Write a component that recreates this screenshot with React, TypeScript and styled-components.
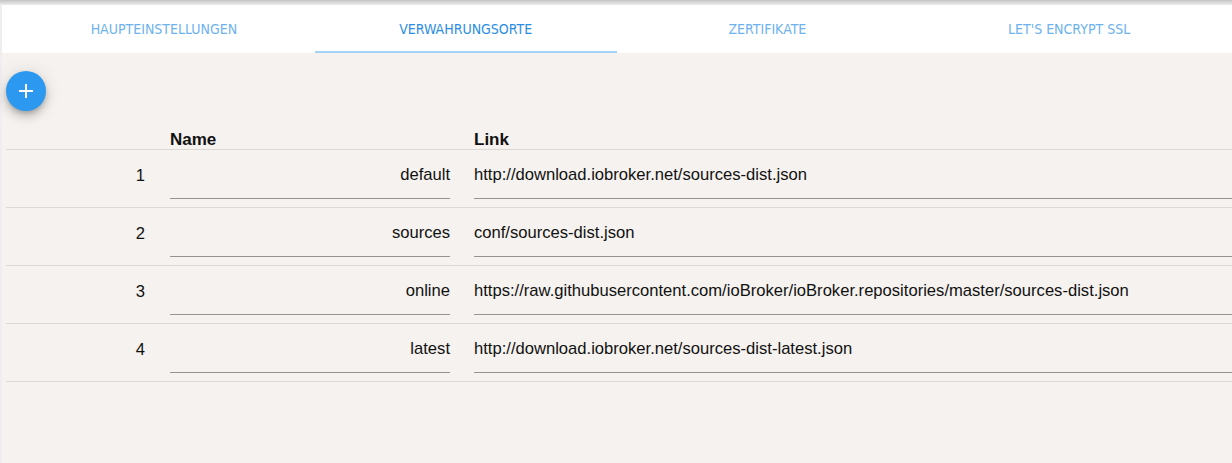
import React from 'react'
import styled, { createGlobalStyle } from 'styled-components'

const GlobalStyle = createGlobalStyle`
  html, body {
    margin: 0;
    padding: 0;
    background: #f5f2ef;
  }
  #root {
    height: 463px;
    overflow: hidden;
  }
`

const tabs = ['Haupteinstellungen', 'Verwahrungsorte', 'Zertifikate', "Let's Encrypt SSL"]

const repos = [
  { name: 'default', link: 'http://download.iobroker.net/sources-dist.json' },
  { name: 'sources', link: 'conf/sources-dist.json' },
  { name: 'online', link: 'https://raw.githubusercontent.com/ioBroker/ioBroker.repositories/master/sources-dist.json' },
  { name: 'latest', link: 'http://download.iobroker.net/sources-dist-latest.json' },
]

const Page = styled.div`
  height: 463px;
  background: #f5f2ef;
  display: flex;
  flex-direction: column;
  overflow: hidden;
`

const TopBar = styled.div`
  height: 5px;
  flex-shrink: 0;
  background: linear-gradient(#c4c4c4, #dcdcdc 60%, #ececec);
`

const Body = styled.div`
  flex: 1;
  display: flex;
  flex-direction: column;
  border-left: 2px solid #eeeeee;
`

const TabBar = styled.div`
  height: 48px;
  flex-shrink: 0;
  background: #ffffff;
  display: flex;
  padding: 0 12px 0 11px;
`

const Tab = styled.div<{ $active?: boolean }>`
  flex: 1;
  position: relative;
  display: flex;
  align-items: center;
  justify-content: center;
  padding-bottom: 1px;
  font-family: 'DejaVu Sans', sans-serif;
  font-stretch: condensed;
  font-size: 14px;
  text-transform: uppercase;
  color: ${(p) => (p.$active ? '#2a8de6' : '#6db2ef')};

  &::after {
    content: '';
    position: absolute;
    left: 0;
    right: 0;
    bottom: 0;
    height: 2px;
    background: ${(p) => (p.$active ? '#a3d2f6' : 'transparent')};
  }
`

const Toolbar = styled.div`
  padding: 18px 0 0 4px;
  height: 40px;
`

const Fab = styled.button`
  width: 40px;
  height: 40px;
  border-radius: 50%;
  border: none;
  padding: 0;
  background: #2c98f0;
  box-shadow: 0 3px 5px -1px rgba(0, 0, 0, 0.2), 0 6px 10px 0 rgba(0, 0, 0, 0.14),
    0 1px 18px 0 rgba(0, 0, 0, 0.12);
  display: flex;
  align-items: center;
  justify-content: center;
`

const Table = styled.div`
  margin-left: 4px;
  width: 1400px;
  font-family: 'Liberation Sans', Arial, sans-serif;
  font-size: 16.6px;
  color: #111;
`

const Row = styled.div<{ $head?: boolean }>`
  display: grid;
  grid-template-columns: 154px 304px 1fr;
  align-items: ${(p) => (p.$head ? 'end' : 'start')};
  height: ${(p) => (p.$head ? '38px' : '57px')};
  border-bottom: 1px solid #dbd8d5;
  box-sizing: content-box;
`

const HeadCell = styled.div`
  font-weight: bold;
  font-size: 17px;
  line-height: 18px;
  padding: 0 10px;
`

const IndexCell = styled.div`
  height: 49px;
  display: flex;
  align-items: center;
  justify-content: flex-end;
  padding-right: 15px;
  padding-top: 2px;
  box-sizing: border-box;
`

const FieldCell = styled.div<{ $narrow?: boolean }>`
  padding: ${(p) => (p.$narrow ? '0 14px 0 10px' : '0 0 0 10px')};
`

const Field = styled.div<{ $right?: boolean }>`
  height: 49px;
  box-sizing: border-box;
  border-bottom: 1px solid #949494;
  display: flex;
  align-items: center;
  justify-content: ${(p) => (p.$right ? 'flex-end' : 'flex-start')};
  padding-top: 1px;
  white-space: nowrap;
`

const PlusIcon = () => (
  <svg width='18' height='18' viewBox='0 0 18 18'>
    <path d='M9 2v14M2 9h14' stroke='#fff' strokeWidth='2' />
  </svg>
)

const App = () => {
  return (
    <Page>
      <GlobalStyle />
      <TopBar />
      <Body>
        <TabBar>
          {tabs.map((t, i) => (
            <Tab key={t} $active={i === 1}>
              {t}
            </Tab>
          ))}
        </TabBar>
        <Toolbar>
          <Fab>
            <PlusIcon />
          </Fab>
        </Toolbar>
        <Table>
          <Row $head>
            <div />
            <HeadCell>Name</HeadCell>
            <HeadCell>Link</HeadCell>
          </Row>
          {repos.map((r, i) => (
            <Row key={r.name}>
              <IndexCell>{i + 1}</IndexCell>
              <FieldCell $narrow>
                <Field $right>{r.name}</Field>
              </FieldCell>
              <FieldCell>
                <Field>{r.link}</Field>
              </FieldCell>
            </Row>
          ))}
        </Table>
      </Body>
    </Page>
  )
}

export default App
